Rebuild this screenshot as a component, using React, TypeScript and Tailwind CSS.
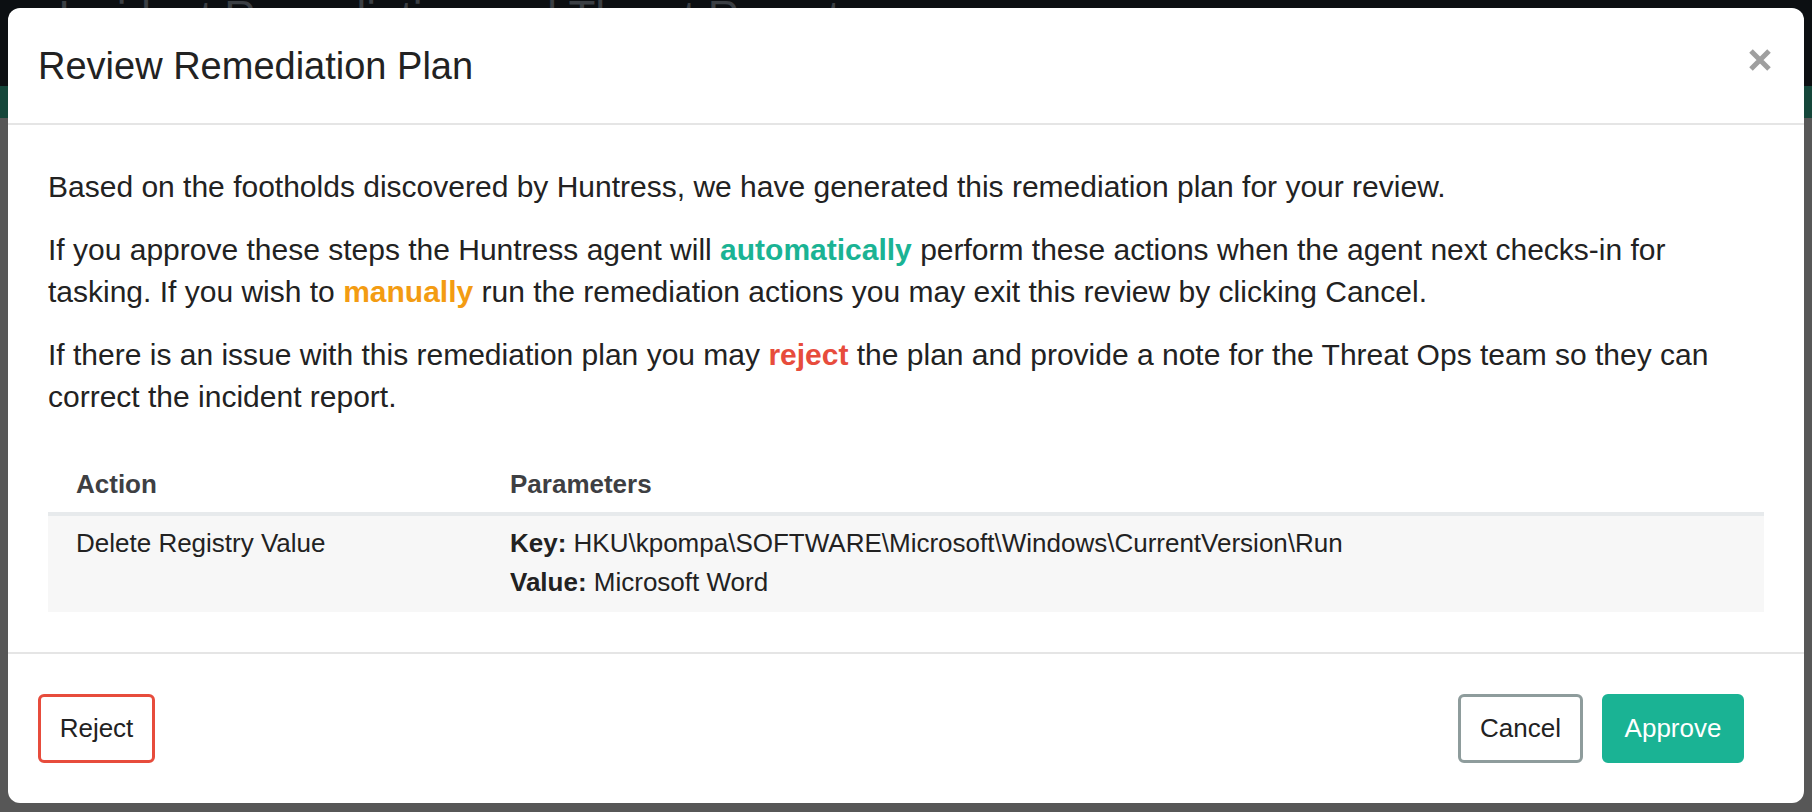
import React from 'react';

const CloseIcon = () => (
  <svg width="22" height="22" viewBox="0 0 22 22" className="block">
    <path d="M2 2 L20 20 M20 2 L2 20" stroke="#9f9f9f" strokeWidth="5" strokeLinecap="butt" />
  </svg>
);

export default function App() {
  return (
    <div className="relative w-[1812px] h-[812px] overflow-hidden bg-[#575757] font-['Liberation_Sans',Arial,Helvetica,sans-serif]">
      {/* page behind the backdrop */}
      <div className="h-[86px] bg-[#0c0f12] overflow-hidden">
        <div className="-mt-[9px] pl-[58px] text-[44px] leading-[52px] text-[#3b3f44] whitespace-nowrap">
          Incident Remediation and Threat Report
        </div>
      </div>
      <div className="h-[32px] bg-[#15463a]" />
      <div className="h-[694px] bg-[#575757]" />

      {/* modal */}
      <div className="absolute left-[8px] top-[8px] w-[1796px] rounded-[12px] bg-white text-[#222]">
        <div className="flex justify-between items-start h-[117px] pl-[30px] pr-[33px] pt-[31px] border-b-2 border-[#e5e5e5]">
          <h4 className="text-[38px] leading-[54px] font-normal text-[#222]">Review Remediation Plan</h4>
          <button className="mt-[10px]">
            <CloseIcon />
          </button>
        </div>

        <div className="px-[40px] pt-[41px] pb-[40px]">
          <p className="text-[30px] leading-[42.5px] mb-[20px]">
            Based on the footholds discovered by Huntress, we have generated this remediation plan for your review.
          </p>
          <p className="text-[30px] leading-[42.5px] mb-[20px]">
            If you approve these steps the Huntress agent will{' '}
            <span className="font-bold text-[#1ab394]">automatically</span> perform these actions when the agent next
            checks-in for tasking. If you wish to <span className="font-bold text-[#f39c12]">manually</span> run the
            remediation actions you may exit this review by clicking Cancel.
          </p>
          <p className="text-[30px] leading-[42.5px]">
            If there is an issue with this remediation plan you may{' '}
            <span className="font-bold text-[#e74c3c]">reject</span> the plan and provide a note for the Threat Ops team
            so they can correct the incident report.
          </p>

          <table className="w-full mt-[37px] border-collapse text-[26px] leading-[39px]">
            <thead>
              <tr>
                <th className="w-[434px] text-left font-bold text-[#3e3f43] px-[28px] pt-[9px] pb-[8px] border-b-4 border-[#e7eaec]">
                  Action
                </th>
                <th className="text-left font-bold text-[#3e3f43] px-[28px] pt-[9px] pb-[8px] border-b-4 border-[#e7eaec]">
                  Parameters
                </th>
              </tr>
            </thead>
            <tbody>
              <tr className="bg-[#f7f7f7]">
                <td className="align-top px-[28px] pt-[8px] pb-[10px]">Delete Registry Value</td>
                <td className="align-top px-[28px] pt-[8px] pb-[10px]">
                  <div>
                    <span className="font-bold">Key:</span> HKU\kpompa\SOFTWARE\Microsoft\Windows\CurrentVersion\Run
                  </div>
                  <div>
                    <span className="font-bold">Value:</span> Microsoft Word
                  </div>
                </td>
              </tr>
            </tbody>
          </table>
        </div>

        <div className="flex justify-between items-center border-t-2 border-[#e5e5e5] pt-[40px] pb-[40px] pl-[30px] pr-[60px]">
          <button className="flex items-center justify-center w-[117px] h-[69px] border-[3px] border-[#e74c3c] rounded-[6px] bg-white text-[26px] text-[#222]">
            Reject
          </button>
          <div className="flex gap-[19px]">
            <button className="flex items-center justify-center w-[125px] h-[69px] border-[3px] border-[#8e9c9c] rounded-[6px] bg-white text-[26px] text-[#222]">
              Cancel
            </button>
            <button className="flex items-center justify-center w-[142px] h-[69px] border-[3px] border-[#1ab394] rounded-[6px] bg-[#1ab394] text-[26px] text-white">
              Approve
            </button>
          </div>
        </div>
      </div>
    </div>
  );
}
